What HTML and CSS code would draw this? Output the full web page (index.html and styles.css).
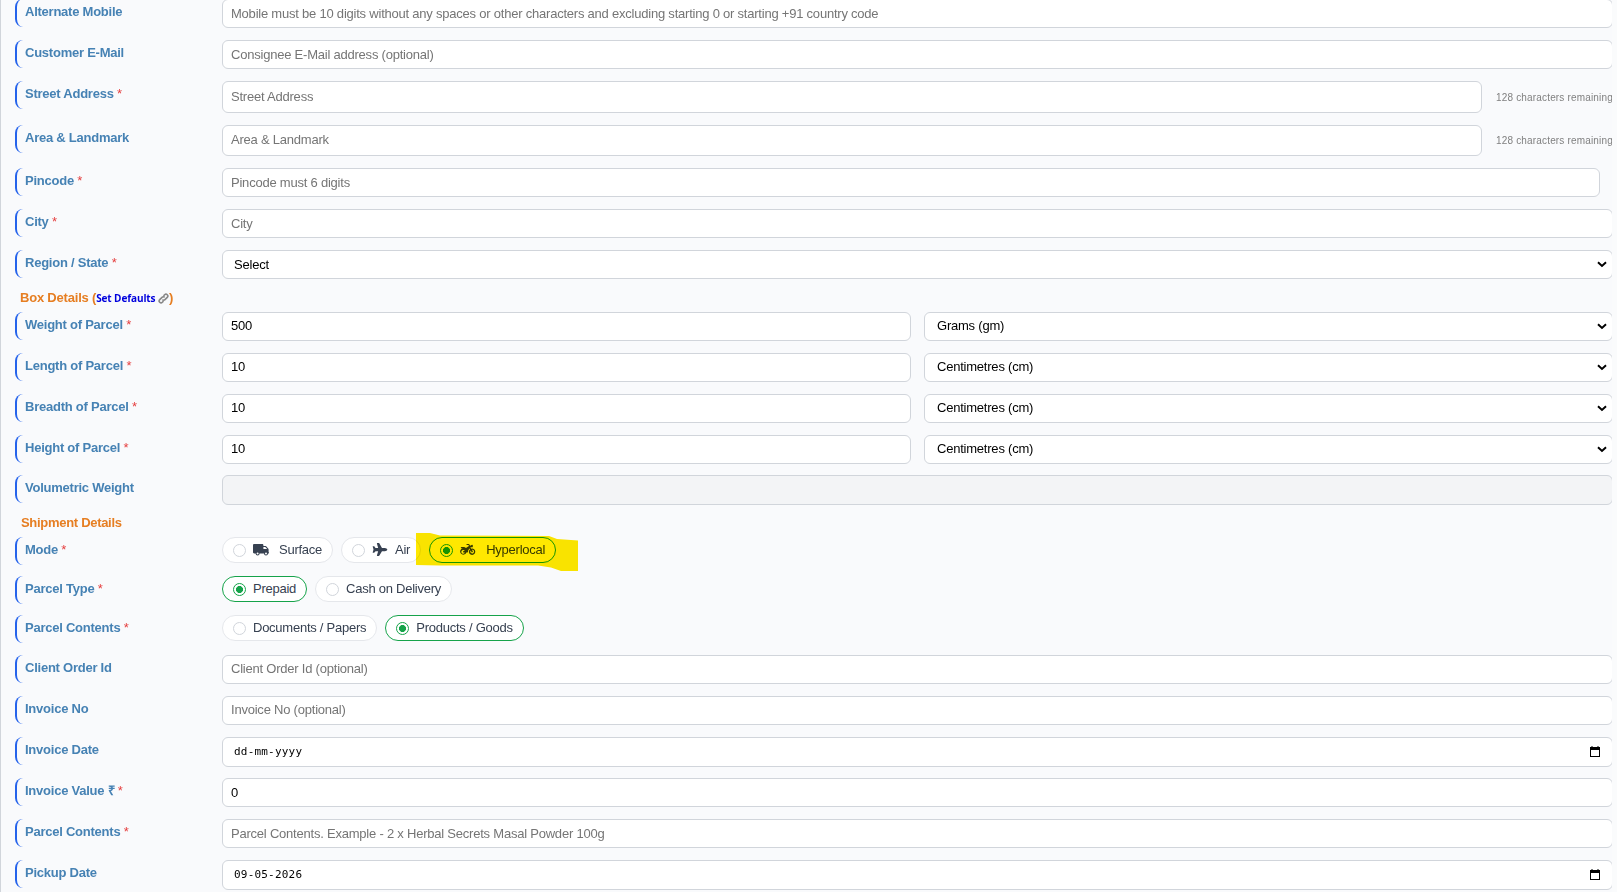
FILE: index.html
```html
<!DOCTYPE html>
<html lang="en">
<head>
    <meta charset="UTF-8">
    <meta name="viewport" content="width=device-width, initial-scale=1.0">
    <title>Create Shipment</title>
    <link rel="stylesheet" href="styles.css">
</head>
<body>

<form class="shipment-form">
    <!-- Consignee -->
    <div class="form-row">
        <label class="label" for="alt-mobile">Alternate Mobile</label>
        <input class="field field-low" type="text" id="alt-mobile" placeholder="Mobile must be 10 digits without any spaces or other characters and excluding starting 0 or starting +91 country code">
    </div>
    <div class="form-row">
        <label class="label" for="email">Customer E-Mail</label>
        <input class="field field-low" type="text" id="email" placeholder="Consignee E-Mail address (optional)">
    </div>
    <div class="form-row row-street">
        <label class="label" for="street">Street Address <span class="req">*</span></label>
        <div class="counted">
            <input class="field" type="text" id="street" placeholder="Street Address">
            <span class="remaining">128 characters remaining</span>
        </div>
    </div>
    <div class="form-row row-area">
        <label class="label" for="area">Area &amp; Landmark</label>
        <div class="counted">
            <input class="field" type="text" id="area" placeholder="Area &amp; Landmark">
            <span class="remaining">128 characters remaining</span>
        </div>
    </div>
    <div class="form-row">
        <label class="label" for="pincode">Pincode <span class="req">*</span></label>
        <input class="field field-low field-pincode" type="text" id="pincode" placeholder="Pincode must 6 digits">
    </div>
    <div class="form-row">
        <label class="label" for="city">City <span class="req">*</span></label>
        <input class="field field-low" type="text" id="city" placeholder="City">
    </div>
    <div class="form-row">
        <label class="label" for="state">Region / State <span class="req">*</span></label>
        <select class="field" id="state"><option>Select</option></select>
    </div>

    <!-- Box -->
    <h3 class="section section-box">Box Details (<a href="#" class="defaults">Set Defaults <svg class="link-icon" viewBox="0 0 24 24"><path d="M9.5 14.500a4 4 0 0 0 5.700 0l5-5a4 4 0 0 0-5.700-5.700l-2.500 2.500M14.500 9.500a4 4 0 0 0-5.700 0l-5 5a4 4 0 0 0 5.700 5.700l2.500-2.500"/></svg></a>)</h3>
    <div class="form-row">
        <label class="label" for="weight">Weight of Parcel <span class="req">*</span></label>
        <div class="pair">
            <input class="field" type="text" id="weight" value="500">
            <select class="field"><option>Grams (gm)</option></select>
        </div>
    </div>
    <div class="form-row">
        <label class="label" for="length">Length of Parcel <span class="req">*</span></label>
        <div class="pair">
            <input class="field" type="text" id="length" value="10">
            <select class="field"><option>Centimetres (cm)</option></select>
        </div>
    </div>
    <div class="form-row">
        <label class="label" for="breadth">Breadth of Parcel <span class="req">*</span></label>
        <div class="pair">
            <input class="field" type="text" id="breadth" value="10">
            <select class="field"><option>Centimetres (cm)</option></select>
        </div>
    </div>
    <div class="form-row row-height">
        <label class="label" for="height">Height of Parcel <span class="req">*</span></label>
        <div class="pair">
            <input class="field" type="text" id="height" value="10">
            <select class="field"><option>Centimetres (cm)</option></select>
        </div>
    </div>
    <div class="form-row row-volumetric">
        <label class="label" for="volumetric">Volumetric Weight</label>
        <input class="field" type="text" id="volumetric" disabled>
    </div>

    <!-- Shipment -->
    <h3 class="section section-shipment">Shipment Details</h3>
    <div class="form-row row-pills">
        <span class="label">Mode <span class="req">*</span></span>
        <div class="pills">
            <label class="pill"><input type="radio" name="mode">
                <svg class="mode-icon" viewBox="0 0 640 512"><path d="M48 32h320c26 0 48 22 48 48v32h70c16 0 30 7 40 18l80 90c12 12 18 24 18 40v110c9 0 16 7 16 15s-7 31-16 31h-24a80 80 0 0 1-160 0H264a80 80 0 0 1-160 0H48c-26 0-48-22-48-48V80c0-26 22-48 48-48zM184 456a40 40 0 1 0 0-80 40 40 0 0 0 0 80zM416 160v80h152v-6l-78-74zM520 456a40 40 0 1 0 0-80 40 40 0 0 0 0 80z" fill-rule="evenodd"/></svg>
                Surface</label>
            <label class="pill pill-air"><input type="radio" name="mode">
                <svg class="mode-icon" viewBox="0 0 576 512"><path d="M482 192c34 0 94 29 94 64s-60 64-94 64H366L265 496c-5 10-16 16-27 16h-57c-10 0-18-10-15-20l49-172H112l-43 58c-3 4-8 6-13 6H14c-8 0-14-6-14-14l32-114L0 142c0-8 6-14 14-14h42c5 0 10 2 13 6l43 58h103L166 20c-3-10 5-20 15-20h57c11 0 22 6 27 16l101 176z"/></svg>
                Air</label>
            <label class="pill"><input type="radio" name="mode" checked>
                <svg class="mode-icon" viewBox="0 0 640 512"><path d="M280 32c-13 0-24 11-24 24s11 24 24 24h58l19 36-120 76c-22-20-52-32-85-32H56c-13 0-24 11-24 24s11 24 24 24h52A128 128 0 1 0 254 376h40c16 0 26-12 26-28 0-54 26-100 68-132l16 29A128 128 0 1 0 446 223l-30-56h72c13 0 24-11 24-24V88c0-18-16-28-31-21l-78 39-33-62c-4-8-13-12-22-12zM128 280a72 72 0 0 1 64 40h-64v56h64a72 72 0 1 1-64-96zm302 17 40 74 50-27-42-75a72 72 0 1 1-48 28z"/></svg>
                Hyperlocal
                <svg class="marker" viewBox="0 0 162 38"><path d="M0 0h14l10 2.500 109 .5 8 3 21 1.500v30.500h-17l-10-3.500-13-2H24L0 32z"/></svg></label>
        </div>
    </div>
    <div class="form-row row-pills">
        <span class="label">Parcel Type <span class="req">*</span></span>
        <div class="pills">
            <label class="pill"><input type="radio" name="type" checked>Prepaid</label>
            <label class="pill"><input type="radio" name="type">Cash on Delivery</label>
        </div>
    </div>
    <div class="form-row row-pills">
        <span class="label">Parcel Contents <span class="req">*</span></span>
        <div class="pills">
            <label class="pill"><input type="radio" name="contents">Documents / Papers</label>
            <label class="pill"><input type="radio" name="contents" checked>Products / Goods</label>
        </div>
    </div>
    <div class="form-row row-order">
        <label class="label" for="order-id">Client Order Id</label>
        <input class="field" type="text" id="order-id" placeholder="Client Order Id (optional)">
    </div>
    <div class="form-row">
        <label class="label" for="invoice-no">Invoice No</label>
        <input class="field" type="text" id="invoice-no" placeholder="Invoice No (optional)">
    </div>
    <div class="form-row row-date">
        <span class="label">Invoice Date</span>
        <div class="field date">
            <span>dd-mm-yyyy</span>
            <svg class="calendar" viewBox="0 0 10 11"><path d="M0 1h1.500V0h1v1h5V0h1v1H10v10H0zm1 3v6h8V4z"/></svg>
        </div>
    </div>
    <div class="form-row">
        <label class="label" for="invoice-value">Invoice Value ₹ <span class="req">*</span></label>
        <input class="field field-low" type="text" id="invoice-value" value="0">
    </div>
    <div class="form-row">
        <label class="label" for="parcel-contents">Parcel Contents <span class="req">*</span></label>
        <input class="field field-low" type="text" id="parcel-contents" placeholder="Parcel Contents. Example - 2 x Herbal Secrets Masal Powder 100g">
    </div>
    <div class="form-row row-date">
        <span class="label">Pickup Date</span>
        <div class="field date">
            <span>09-05-2026</span>
            <svg class="calendar" viewBox="0 0 10 11"><path d="M0 1h1.500V0h1v1h5V0h1v1H10v10H0zm1 3v6h8V4z"/></svg>
        </div>
    </div>
</form>

</body>
</html>
```
FILE: styles.css
```css
* {
    box-sizing: border-box;
}
body {
    margin: 0;
    height: 892px;
    overflow: hidden;
    background-color: #fafbfc;
    font-family: "Liberation Sans", Arial, sans-serif;
    font-size: 13px;
    letter-spacing: -0.22px;
}
.shipment-form {
    width: 1612px;
    height: 893px;
    margin-top: -1px;
    padding-left: 14px;
    border-left: 1px solid #d1d5db;
    background-color: #f9fafc;
    overflow: hidden;
}
.form-row {
    display: grid;
    grid-template-columns: 207px 1391px;
    height: 29px;
    margin-bottom: 12px;
}
.label {
    height: 28px;
    padding: 5px 0 0 8px;
    border-left: 2px solid #2563eb;
    border-radius: 8px;
    color: #4682b4;
    font-weight: bold;
    line-height: 16px;
    letter-spacing: -0.24px;
    white-space: nowrap;
}
.req {
    color: #e53e3e;
    font-weight: normal;
}
.field {
    width: 100%;
    height: 100%;
    margin: 0;
    padding: 0 8px 2px;
    border: 1px solid #d1d5db;
    border-radius: 6px;
    background-color: #fff;
    color: #000;
    font-family: inherit;
    font-size: 13px;
    letter-spacing: inherit;
}
.field::placeholder {
    color: #757575;
}
.field:disabled {
    background-color: #f3f4f6;
}
.field-low {
    padding-bottom: 0;
}
select.field {
    padding: 0 20px 0 11px;
    appearance: none;
    background-image: url("data:image/svg+xml,%3Csvg xmlns='http://www.w3.org/2000/svg' width='10' height='7'%3E%3Cpath d='M1 1.300l4 3.700 4-3.700' fill='none' stroke='black' stroke-width='2'/%3E%3C/svg%3E");
    background-repeat: no-repeat;
    background-position: right 5px center;
}
.field-pincode {
    width: 1378px;
}
.counted {
    display: flex;
    align-items: center;
    gap: 14px;
}
.counted .field {
    width: 1260px;
}
.remaining {
    color: #808080;
    font-size: 10px;
    letter-spacing: 0.17px;
    white-space: nowrap;
}
.pair {
    display: grid;
    grid-template-columns: 689px 689px;
    gap: 13px;
}
.pair select.field {
    padding-bottom: 2px;
    padding-left: 12px;
}
.row-street {
    height: 32px;
}
.row-area {
    height: 31px;
}
.row-height {
    margin-bottom: 11px;
}
.row-volumetric {
    height: 30px;
    margin-bottom: 0;
}
.row-date {
    height: 30px;
    margin-bottom: 11px;
}
.row-pills {
    height: 28px;
    margin-bottom: 11px;
}
.row-order {
    margin-top: 12px;
}
.section {
    margin: 0;
    color: #e67e22;
    font-size: 13px;
    line-height: 16px;
    letter-spacing: -0.3px;
}
.section-box {
    height: 33px;
    margin-top: -12px;
    padding: 11px 0 0 5px;
    letter-spacing: -0.2px;
}
.section-shipment {
    height: 32px;
    padding: 10px 0 0 6px;
}
.defaults {
    color: #00d;
    font-family: "Open Sans", sans-serif;
    font-size: 10px;
    letter-spacing: -0.1px;
    text-decoration: none;
}
.link-icon {
    width: 11px;
    height: 11px;
    vertical-align: -2px;
    fill: none;
    stroke: #888;
    stroke-width: 3.5;
}
.pills {
    display: flex;
    gap: 8px;
    height: 26px;
}
.pill {
    display: flex;
    align-items: center;
    position: relative;
    padding: 0 10px 1px;
    border: 1px solid #e5e7eb;
    border-radius: 13px;
    background-color: #fff;
    color: #374151;
    letter-spacing: -0.25px;
    white-space: nowrap;
}
.pill:has(input:checked) {
    border-color: #16a34a;
}
.pill input {
    width: 13px;
    height: 13px;
    margin: 1px 7px 0 0;
    border: 1px solid #d1d5db;
    border-radius: 50%;
    background-color: #fff;
    appearance: none;
}
.pill input:checked {
    border-color: #16a34a;
    background: radial-gradient(circle, #16a34a 3.2px, #fff 3.8px);
}
.mode-icon {
    width: 16px;
    height: 13px;
    margin-right: 10px;
    fill: #374151;
}
.pill-air .mode-icon {
    margin-right: 7px;
}
/* highlighter stroke over the hyperlocal option */
.marker {
    position: absolute;
    left: -14px;
    top: -5px;
    width: 162px;
    height: 38px;
    fill: #ffe800;
    mix-blend-mode: multiply;
}
.date {
    display: flex;
    align-items: center;
    justify-content: space-between;
    padding: 0 12px 0 11px;
    font-family: "DejaVu Sans Mono", monospace;
    font-size: 11px;
    letter-spacing: 0.2px;
}
.date span {
    padding-bottom: 1px;
}
.calendar {
    width: 10px;
    height: 11px;
    margin-bottom: 1px;
}
```
